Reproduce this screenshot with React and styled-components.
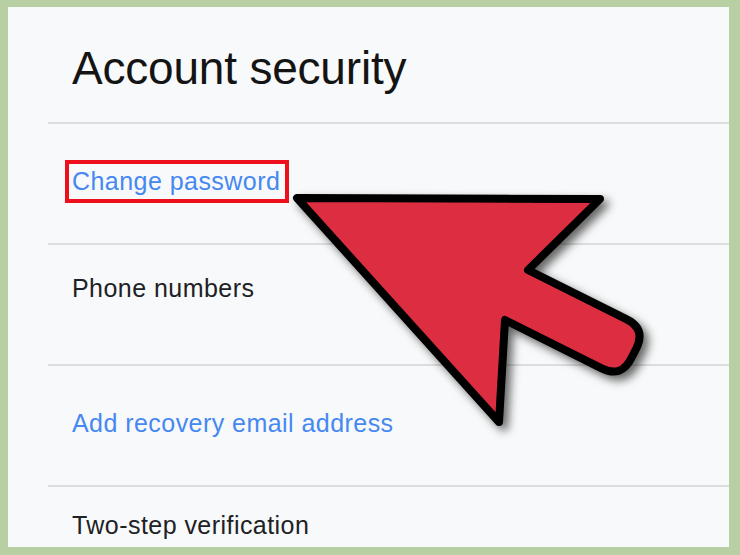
import React from "react";
import styled, { createGlobalStyle } from "styled-components";

const GlobalStyle = createGlobalStyle`
  html, body { margin: 0; padding: 0; background: #b7cfa2; }
  #root { width: 740px; height: 555px; }
`;

const Frame = styled.div`
  position: relative;
  width: 740px;
  height: 555px;
  box-sizing: border-box;
  padding: 7px 11px 8px 8px;
  background: #b7cfa2;
  font-family: "Liberation Sans", Arial, sans-serif;
  overflow: hidden;
`;

const Panel = styled.div`
  height: 100%;
  background: #f8f9fa;
  padding-left: 40px;
  display: flex;
  flex-direction: column;
  overflow: hidden;
`;

const Header = styled.div`
  height: 115px;
  flex: none;
  box-sizing: border-box;
  padding: 6px 0 0 24px;
  display: flex;
  align-items: center;
`;

const Title = styled.h1`
  margin: 0;
  font-size: 46px;
  font-weight: 400;
  color: #141414;
  letter-spacing: -0.2px;
`;

const Row = styled.div`
  height: 121px;
  flex: none;
  box-sizing: border-box;
  border-top: 2px solid #dcdddf;
  padding: 0 0 ${(p) => p.$lift ?? 5}px 24px;
  display: flex;
  align-items: center;
`;

const Label = styled.span`
  font-size: 25px;
  letter-spacing: 0.45px;
  line-height: 30px;
  color: ${(p) => (p.$link ? "#4688f1" : "#202124")};
`;

const Highlight = styled.span`
  display: inline-block;
  margin: 0 0 0 -7px;
  padding: 2px 5px 3px 3px;
  border: 4px solid #ee0f1d;
`;

const Overlay = styled.svg`
  position: absolute;
  left: 0;
  top: 0;
  pointer-events: none;
`;

function Arrow() {
  return (
    <Overlay width="740" height="555" viewBox="0 0 740 555">
      <defs>
        <filter id="sh" x="-20%" y="-20%" width="140%" height="140%">
          <feDropShadow dx="5" dy="5" stdDeviation="5" floodColor="#000" floodOpacity="0.6" />
        </filter>
      </defs>
      <path
        d="M297,198 L600,199 L528,270 L626.3,319.2 Q646,329 636.2,348.7 L631.4,358 Q621.4,378.2 601.7,368.4 L505,320 L499,422 Z"
        fill="#dc2f40"
        stroke="#000"
        strokeWidth="8"
        strokeLinejoin="round"
        filter="url(#sh)"
      />
    </Overlay>
  );
}

export default function App() {
  return (
    <>
      <GlobalStyle />
      <Frame>
        <Panel>
          <Header>
            <Title>Account security</Title>
          </Header>
          <Row>
            <Highlight>
              <Label $link>Change password</Label>
            </Highlight>
          </Row>
          <Row $lift={33}>
            <Label>Phone numbers</Label>
          </Row>
          <Row>
            <Label $link>Add recovery email address</Label>
          </Row>
          <Row $lift={43}>
            <Label>Two-step verification</Label>
          </Row>
        </Panel>
        <Arrow />
      </Frame>
    </>
  );
}
